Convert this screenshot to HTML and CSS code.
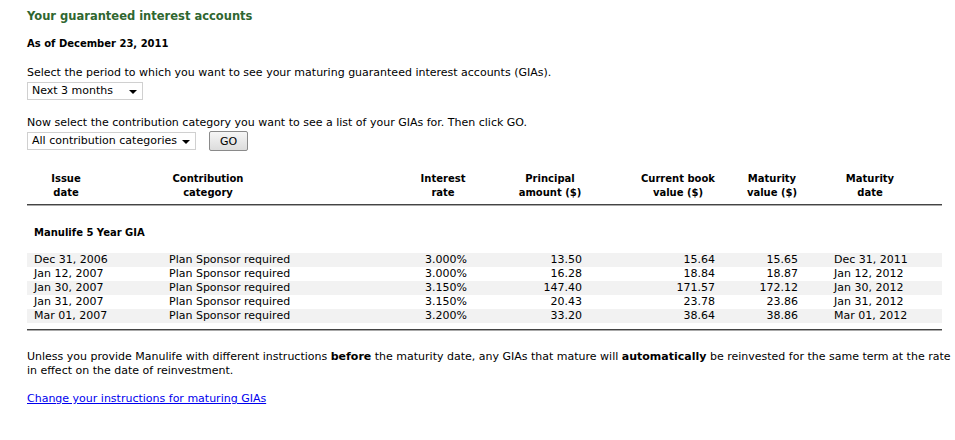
FILE: index.html
```html
<!DOCTYPE html>
<html>
<head>
<meta charset="utf-8">
<link rel="stylesheet" href="styles.css">
</head>
<body>
<div class="page">
  <h1 class="title">Your guaranteed interest accounts</h1>
  <div class="asof">As of December 23, 2011</div>

  <p class="label">Select the period to which you want to see your maturing guaranteed interest accounts (GIAs).</p>
  <div class="controls">
    <div class="select sel-period"><span>Next 3 months</span><span class="arrow"></span></div>
  </div>

  <p class="label label2">Now select the contribution category you want to see a list of your GIAs for. Then click GO.</p>
  <div class="controls">
    <div class="select sel-cat"><span>All contribution categories</span><span class="arrow"></span></div>
    <button class="go">GO</button>
  </div>

  <table class="gia">
    <colgroup>
      <col class="c1"><col class="c2"><col class="c3"><col class="c4"><col class="c5"><col class="c6"><col class="c7">
    </colgroup>
    <thead>
      <tr>
        <th class="h1">Issue<br>date</th>
        <th class="h2">Contribution<br>category</th>
        <th class="h3">Interest<br>rate</th>
        <th class="h4">Principal<br>amount ($)</th>
        <th class="h5">Current book<br>value ($)</th>
        <th class="h6">Maturity<br>value ($)</th>
        <th class="h7">Maturity<br>date</th>
      </tr>
    </thead>
    <tbody>
      <tr class="rule"><td colspan="7"></td></tr>
      <tr class="group"><td colspan="7">Manulife 5 Year GIA</td></tr>
      <tr class="row odd"><td class="d1">Dec 31, 2006</td><td class="d2">Plan Sponsor required</td><td class="d3">3.000%</td><td class="d4">13.50</td><td class="d5">15.64</td><td class="d6">15.65</td><td class="d7">Dec 31, 2011</td></tr>
      <tr class="row"><td class="d1">Jan 12, 2007</td><td class="d2">Plan Sponsor required</td><td class="d3">3.000%</td><td class="d4">16.28</td><td class="d5">18.84</td><td class="d6">18.87</td><td class="d7">Jan 12, 2012</td></tr>
      <tr class="row odd"><td class="d1">Jan 30, 2007</td><td class="d2">Plan Sponsor required</td><td class="d3">3.150%</td><td class="d4">147.40</td><td class="d5">171.57</td><td class="d6">172.12</td><td class="d7">Jan 30, 2012</td></tr>
      <tr class="row"><td class="d1">Jan 31, 2007</td><td class="d2">Plan Sponsor required</td><td class="d3">3.150%</td><td class="d4">20.43</td><td class="d5">23.78</td><td class="d6">23.86</td><td class="d7">Jan 31, 2012</td></tr>
      <tr class="row odd"><td class="d1">Mar 01, 2007</td><td class="d2">Plan Sponsor required</td><td class="d3">3.200%</td><td class="d4">33.20</td><td class="d5">38.64</td><td class="d6">38.86</td><td class="d7">Mar 01, 2012</td></tr>
      <tr class="spacer"><td colspan="7"></td></tr>
      <tr class="rule"><td colspan="7"></td></tr>
    </tbody>
  </table>

  <p class="note">Unless you provide Manulife with different instructions <b>before</b> the maturity date, any GIAs that mature will <b>automatically</b> be reinvested for the same term at the rate in effect on the date of reinvestment.</p>

  <p class="linkline"><a href="#">Change your instructions for maturing GIAs</a></p>
</div>
</body>
</html>
```

FILE: styles.css
```css
html, body {
  margin: 0;
  padding: 0;
  overflow: hidden;
  background: #fff;
}
body {
  font-family: "DejaVu Sans", Verdana, sans-serif;
  font-size: 11px;
  line-height: 14px;
  color: #000;
}
.page {
  padding: 9px 0 0 27px;
  width: 940px;
}
.title {
  margin: 0;
  font-size: 11.5px;
  line-height: 14px;
  font-weight: bold;
  color: #2f6630;
}
.asof {
  margin-top: 14px;
  font-weight: bold;
  font-size: 10px;
}
.label {
  margin: 15px 0 0 0;
}
.label2 {
  margin-top: 15px;
}
.controls {
  display: flex;
  align-items: center;
  gap: 13px;
  margin-top: 1px;
  height: 20px;
}
.select {
  display: flex;
  align-items: center;
  justify-content: space-between;
  box-sizing: border-box;
  height: 18px;
  border: 1px solid #d0d0d0;
  background: #fff;
  padding: 0 5px 0 4px;
}
.sel-period { width: 116px; }
.sel-cat { width: 169px; }
.arrow {
  width: 0;
  height: 0;
  border-left: 4px solid transparent;
  border-right: 4px solid transparent;
  border-top: 4px solid #000;
  margin-top: 2px;
}
.go {
  box-sizing: border-box;
  width: 39px;
  height: 20px;
  border: 1px solid #8a8a8a;
  border-radius: 2px;
  background: linear-gradient(#f6f6f6, #dcdcdc);
  font-family: "DejaVu Sans", Verdana, sans-serif;
  font-size: 11px;
  color: #000;
  padding: 0;
}
.gia {
  margin-top: 21px;
  width: 915px;
  border-collapse: collapse;
  table-layout: fixed;
}
.c1 { width: 133px; }
.c2 { width: 240px; }
.c3 { width: 100px; }
.c4 { width: 110px; }
.c5 { width: 130px; }
.c6 { width: 80px; }
.c7 { width: 122px; }
.gia th {
  font-size: 10px;
  font-weight: bold;
  line-height: 14px;
  text-align: center;
  padding: 0 0 4px 0;
  vertical-align: bottom;
  white-space: nowrap;
}
.h1 { padding-right: 55px !important; }
.h2 { padding-right: 144px !important; }
.h3 { padding-right: 14px !important; }
.h4 { padding-right: 10px !important; }
.h5 { padding-left: 6px !important; }
.h6 { padding-right: 16px !important; }
.h7 { padding-right: 22px !important; }
.gia td {
  padding: 0;
  white-space: nowrap;
}
.rule td {
  height: 0;
  border-top: 1px solid #444;
  border-bottom: 1px solid #aaa;
}
.group td {
  font-weight: bold;
  font-size: 10px;
  padding: 20px 0 13px 7px;
}
.row td { height: 14px; line-height: 14px; }
.row.odd td { background: #f2f2f2; }
.d1 { padding-left: 7px !important; }
.d2 { padding-left: 9px !important; }
.d3 { text-align: right; padding-right: 33px !important; }
.d4 { text-align: right; padding-right: 28px !important; }
.d5 { text-align: right; padding-right: 25px !important; }
.d6 { text-align: right; padding-right: 22px !important; }
.d7 { padding-left: 14px !important; }
.spacer td { height: 6px; }
.note {
  margin: 19px 0 0 0;
  width: 925px;
}
.linkline {
  margin: 14px 0 0 0;
}
.linkline a {
  color: #0000ee;
  text-decoration: underline;
}
```
